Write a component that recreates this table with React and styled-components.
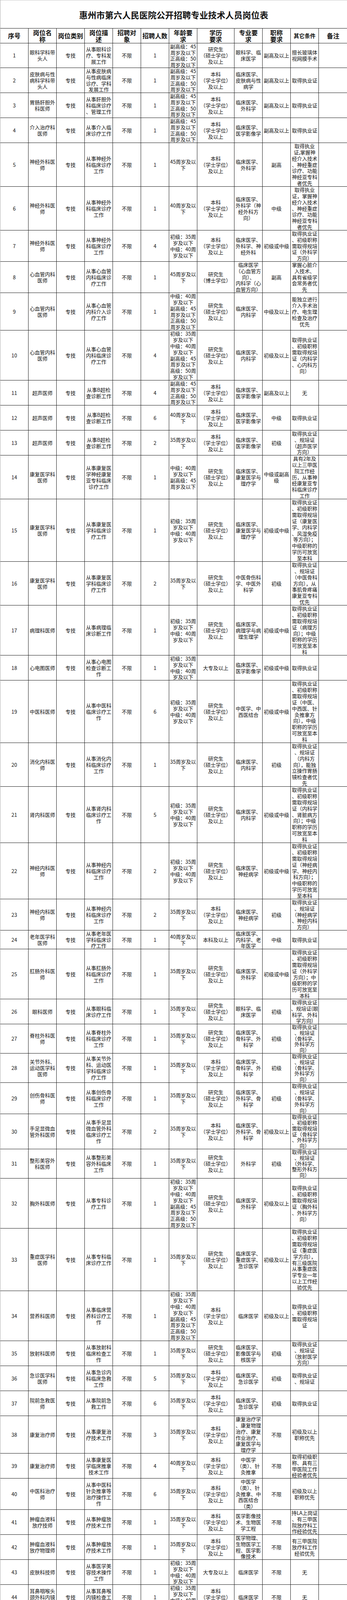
import React from 'react'
import styled, { createGlobalStyle } from 'styled-components'

const GlobalStyle = createGlobalStyle`
  html, body {
    margin: 0;
    padding: 0;
    background: #fff;
  }
  body {
    font-family: 'Noto Sans CJK SC', 'Noto Sans', sans-serif;
    color: #111;
  }
`

const COLS = '72px 72px 72px 72px 72px 72px 72px 95px 72px 72px 72px 73px'

// age strings
const HI = '副高级：45\n周岁及以下\n正高级：50\n周岁及以下'
const A45 = '45周岁及以\n下'
const A40 = '40周岁及以\n下'
const A35 = '35周岁及以\n下'
const A30 = '30周岁及以\n下'
const JZ = '初级：35周\n岁及以下\n中级：40周\n岁及以下'
const ZF = '中级：40周\n岁及以下\n副高级：45\n周岁及以下'
const ALL = JZ + '\n' + HI

// education strings
const SS = '研究生\n（硕士学位）\n及以上'
const BK = '本科\n（学士学位）\n及以上'
const BS = '研究生\n（博士学位）'
const DZ = '大专及以上'

const headers = [
  ['序号'],
  ['岗位名\n称'],
  ['岗位类别'],
  ['岗位描\n述'],
  ['招聘对\n象'],
  ['招聘人数'],
  ['年龄要\n求'],
  ['学历\n要求'],
  ['专业要\n求'],
  ['职称\n要求'],
  ['其它条件', true],
  ['备注'],
]

// [height, name, description, count, age, education, major, title, other]
const rows = [
  [63, '眼科学科带\n头人', '从事眼科诊\n疗、专科发\n展工作', '1', HI, SS, '眼科学、临\n床医学', '副高及以上', '擅长玻璃体\n视网膜手术'],
  [64, '皮肤病与性\n病科学科带\n头人', '从事皮肤病\n与性病临床\n诊疗、学科\n发展工作', '1', HI, BK, '临床医学、\n皮肤病与性\n病学', '副高及以上', '取得执业证'],
  [64, '胃肠肝胆外\n科医师', '从事肝胆外\n科临床诊疗\n、管理工作', '1', HI, BK, '临床医学、\n外科学', '副高及以上', '取得执业证'],
  [64, '介入治疗科\n医师', '从事介入临\n床诊疗工作', '1', HI, BK, '临床医学、\n医学影像学', '副高及以上', '取得执业证'],
  [112, '神经外科医\n师', '从事神经外\n科临床诊疗\n工作', '1', A45, BK, '临床医学、\n外科学', '副高', '取得执业\n证,掌握神\n经介入技术\n、神经重症\n诊疗、功能\n神经亚专科\n者优先'],
  [112, '神经外科医\n师', '从事神经外\n科临床诊疗\n工作', '1', A40, BK, '临床医学、\n外科学（神\n经外科方\n向）', '中级', '取得执业\n证，掌握神\n经介入技术\n、神经重症\n诊疗、功能\n神经亚专科\n者优先'],
  [80, '神经外科医\n师', '从事神经外\n科临床诊疗\n工作', '4', JZ, BK, '临床医学、\n外科学、神\n经外科', '初级或中级', '取得执业证\n、初级职称\n需取得规培\n证（外科学\n方向）'],
  [80, '心血管内科\n医师', '从事心血管\n内科临床诊\n疗工作', '1', A45, BS, '临床医学\n（心血管方\n向）、\n内科学（心\n血管方向）', '副高', '掌握心脏介\n入技术、\n具有省级学\n会常务者优\n先'],
  [96, '心血管内科\n医师', '从事心血管\n内科介入诊\n疗工作', '1', ZF + '\n正高级：50\n周岁及以下', SS, '临床医学、\n内科学', '中级及以上', '能独立进行\n介入手术治\n疗、电生理\n检查及治疗\n优先'],
  [128, '心血管内科\n医师', '从事心血管\n内科临床诊\n疗工作', '4', JZ + '\n副高级：45\n周岁及以下\n高级：50周\n岁及以下', SS, '临床医学、\n内科学', '初级及以上', '取得执业证\n、初级职称\n需取得规培\n证（内科学\n、心内科方\n向）'],
  [64, '超声医师', '从事B超检\n查诊断工作', '4', HI, BK, '临床医学、\n医学影像学', '副高及以上', '无'],
  [64, '超声医师', '从事B超检\n查诊断工作', '6', A40, BK, '临床医学、\n医学影像学', '中级', '取得执业证'],
  [64, '超声医师', '从事B超检\n查诊断工作', '2', A35, BK, '临床医学、\n医学影像学', '初级', '取得执业证\n、规培证\n（超声医学\n方向）'],
  [112, '康复医学科\n医师', '从事康复医\n学神经康复\n亚专科临床\n诊疗工作', '1', ZF, SS, '临床医学、\n康复医学与\n理疗学', '中级或副高\n级', '具有2年及\n以上三甲医\n院工作经\n历，从事神\n经康复亚专\n科临床诊疗\n工作'],
  [160, '康复医学科\n医师', '从事康复医\n学科临床诊\n疗工作', '1', JZ, SS, '临床医学、\n康复医学与\n理疗学', '初级或中级', '取得执业证\n、初级职称\n需取得规培\n证（康复医\n学、内科学\n、风湿免疫\n等方向）；\n中级职称的\n学历可放宽\n至本科'],
  [112, '康复医学科\n医师', '从事康复医\n学科临床诊\n疗工作', '2', A35, SS, '中医骨伤科\n学、中医外\n科学', '初级', '取得执业证\n、规培证\n（中医骨科\n方向），从\n事肌骨疼痛\n康复亚专科\n优先'],
  [128, '病理科医师', '从事病理临\n床诊断工作', '1', JZ, SS, '临床医学、\n病理学与病\n理生理学', '初级或中级', '取得执业证\n、初级职称\n需取得规培\n证（病理方\n向）；中级\n职称的学历\n可放宽至本\n科'],
  [64, '心电图医师', '从事心电图\n检查诊断工\n作', '1', JZ, DZ, '临床医学、\n医学影像学', '初级或中级', '取得执业证'],
  [160, '中医科医师', '从事中医科\n临床诊疗工\n作', '6', JZ, SS, '中医学、中\n西医结合', '初级或中级', '取得执业证\n、初级职称\n需取得规培\n证（中医、\n中西医、针\n灸推拿方\n向），中级\n职称的学历\n可放宽至本\n科'],
  [112, '消化内科医\n师', '从事消化内\n科临床诊疗\n工作', '1', A35, SS, '临床医学、\n内科学', '初级', '取得执业证\n、规培证\n（内科方\n向），能独\n立操作胃肠\n镜检查者优\n先'],
  [144, '肾内科医师', '从事肾内科\n临床诊疗工\n作', '5', JZ, SS, '临床医学、\n内科学', '初级或中级', '取得执业证\n、初级职称\n需取得规培\n证（内科学\n、肾脏病方\n向）；中级\n职称的学历\n可放宽至本\n科'],
  [144, '神经内科医\n师', '从事神经内\n科临床诊疗\n工作', '2', JZ, SS, '临床医学、\n神经病学', '初级或中级', '取得执业证\n、初级职称\n需取得规培\n证（神经病\n学、神经内\n科方向）；\n中级职称的\n学历可放宽\n至本科'],
  [80, '神经内科医\n师', '从事神经内\n科临床诊疗\n工作', '2', A35, BK, '临床医学、\n神经病学', '初级', '取得执业证\n、规培证\n（神经病学\n、神经内科\n方向）'],
  [48, '老年医学科\n医师', '从事老年医\n学科临床诊\n疗工作', '1', A40, '本科及以上', '临床医学、\n内科学、老\n年医学', '中级', '取得执业证'],
  [128, '肛肠外科医\n师', '从事肛肠外\n科临床诊疗\n工作', '1', A35, SS, '临床医学、\n外科学', '初级或中级', '取得执业证\n、初级职称\n需取得规培\n证（外科学\n方向）；中\n级职称的学\n历可放宽至\n本科'],
  [64, '眼科医师', '从事眼科临\n床诊疗工作', '1', A35, SS, '眼科学、临\n床医学', '初级', '取得执业证\n、规培证(眼\n科学、外科\n学方向)'],
  [75, '脊柱外科医\n师', '从事脊柱外\n科临床诊疗\n工作', '1', A35, SS, '临床医学、\n骨科学、外\n科学', '初级', '取得执业证\n、规培证\n（骨科学、\n外科学方\n向）'],
  [75, '关节外科、\n运动医学科\n医师', '从事关节外\n科、运动医\n学科临床诊\n疗工作', '1', A35, BK, '临床医学、\n骨科学、外\n科学', '初级', '取得执业证\n、规培证\n（骨科学、\n外科学方\n向）'],
  [80, '创伤骨科医\n师', '从事创伤骨\n科临床诊疗\n工作', '1', A35, SS, '临床医学、\n外科学、骨\n科学', '初级', '取得执业证\n、规培证\n（骨科学、\n外科学方\n向）'],
  [90, '手足显微血\n管外科医师', '从事手足显\n微血管外科\n临床诊疗工\n作', '2', A35, BK, '临床医学、\n外科学、骨\n科学', '初级及以上', '取得执业证\n、初级职称\n需取得规培\n证（骨科学\n、外科学方\n向）'],
  [75, '整形美容外\n科医师', '从事整形美\n容外科临床\n工作', '1', A35, SS, '外科学', '初级', '取得执业证\n、规培证\n（外科学、\n整形外科方\n向）'],
  [128, '胸外科医师', '从事专科诊\n疗工作', '1', ALL, SS, '临床医学、\n外科学', '初级及以上', '取得执业证\n、初级职称\n需取得规培\n证（胸外科\n、外科学方\n向）'],
  [160, '重症医学科\n医师', '从事专科临\n床诊疗工作', '1', A35, SS, '临床医学、\n重症医学、\n急诊医学', '初级及以上', '取得执业证\n、初级职称\n需取得规培\n证（重症医\n学方向），\n有三级医院\n从事重症医\n学专业一年\n以上工作经\n验优先'],
  [128, '营养科医师', '从事临床营\n养科诊疗工\n作', '1', ALL, BK, '临床医学', '初级及以上', '取得执业证\n、初级职称\n需取得规培\n证'],
  [64, '放射科医师', '从事放射科\n临床检查工\n作', '1', A35, SS, '临床医学、\n影像医学与\n核医学', '初级', '取得执业证\n、规培证\n（放射医学\n方向）'],
  [64, '急诊医学科\n医师', '从事急诊内\n科临床急救\n工作', '5', A35, BK, '临床医学、\n急诊医学', '初级', '取得执业证\n、规培证'],
  [64, '院前急救医\n师', '从事院前急\n救工作', '6', A35, BK, '临床医学、\n急诊医学', '初级', '取得执业证'],
  [96, '康复治疗师', '从事康复治\n疗技术工作', '3', A35, BK, '康复治疗学\n、康复物理\n治疗、康复\n作业治疗、\n康复医学与\n理疗学', '不限', '初级及以上\n职称优先'],
  [64, '康复治疗师', '从事康复医\n学临床推拿\n技术工作', '4', A40, BK, '中医学\n（类）、针\n灸推拿', '不限', '取得初级职\n称、具有三\n甲医院工作\n经验者优先'],
  [80, '中医科治疗\n师', '从事中医科\n针灸推拿等\n治疗操作工\n作', '6', A35, BK, '中医学\n（类）、针\n灸推拿、中\n西医结合\n（类）', '不限', '初级及以上\n职称优先'],
  [64, '肿瘤血液科\n放疗技师', '从事肿瘤放\n疗技术工作', '1', A35, BK, '医学影像技\n术、生物医\n学工程', '不限', '持LA上岗证\n、有三甲医\n院放疗科工\n作经验优先'],
  [64, '肿瘤血液科\n放疗物理师', '从事肿瘤放\n疗技术工作', '1', A35, BK, '医学物理、\n生物医学工\n程、医学影\n像技术', '不限', '有三甲医院\n放疗科工作\n经验优先'],
  [64, '皮肤科技师', '从事医学美\n容技术操作\n工作', '1', JZ, DZ, '临床医学', '不限', '无'],
  [64, '耳鼻咽喉头\n颈外科内镜\n技师', '从事耳鼻喉\n内镜检查工\n作', '1', JZ, BK, '临床医学', '不限', '无'],
  [48, '院前急救救\n护队员', '从事院前急\n救救护队员\n工作', '3', A30, DZ, '医疗相关专\n业', '不限', '无'],
]

// line pitch shrinks a little when a cell holds more lines than its row
const pitch = (text, h) => {
  const lines = String(text).split('\n').length
  return Math.max(14.5, Math.min(16, (h - 1) / lines))
}

const Page = styled.div`
  width: 888px;
  border-left: 1px solid #a8a8a8;
  box-sizing: border-box;
  background: #fff;
`

const Title = styled.h1`
  margin: 0;
  height: 72px;
  box-sizing: border-box;
  border-top: 1px solid #c8c8c8;
  display: flex;
  align-items: center;
  justify-content: center;
  font-size: 22px;
  font-weight: 700;
  color: #111;
`

const Table = styled.div`
  border-top: 1px solid #1a1a1a;
`

const Row = styled.div`
  display: grid;
  grid-template-columns: ${COLS};
  grid-template-rows: 100%;
  height: ${({ $h }) => $h}px;
  box-sizing: border-box;
  border-bottom: 1px solid #1a1a1a;
  overflow: hidden;
`

const Cell = styled.div`
  display: flex;
  align-items: center;
  justify-content: center;
  min-height: 0;
  overflow: hidden;
  border-right: 1px solid #1a1a1a;
  font-size: 13px;
  line-height: ${({ $lh }) => $lh || 16}px;
  text-align: center;
  white-space: pre;
  &:last-child {
    border-right: none;
  }
`

const HeadCell = styled(Cell)`
  font-size: ${({ $small }) => ($small ? '14px' : '16px')};
  line-height: 17px;
  font-weight: 700;
`

const Body = ({ h, children }) => <Cell $lh={pitch(children, h)}>{children}</Cell>

export default function App() {
  return (
    <>
      <GlobalStyle />
      <Page>
        <Title>惠州市第六人民医院公开招聘专业技术人员岗位表</Title>
        <Table>
          <Row $h={38}>
            {headers.map(([text, small], i) => (
              <HeadCell key={i} $small={small}>
                {text}
              </HeadCell>
            ))}
          </Row>
          {rows.map(([h, ...cells], i) => {
            const [name, desc, count, age, edu, major, title, other] = cells
            return (
              <Row key={i} $h={h}>
                <Body h={h}>{i + 1}</Body>
                <Body h={h}>{name}</Body>
                <Body h={h}>专技</Body>
                <Body h={h}>{desc}</Body>
                <Body h={h}>不限</Body>
                <Body h={h}>{count}</Body>
                <Body h={h}>{age}</Body>
                <Body h={h}>{edu}</Body>
                <Body h={h}>{major}</Body>
                <Body h={h}>{title}</Body>
                <Body h={h}>{other}</Body>
                <Cell />
              </Row>
            )
          })}
        </Table>
      </Page>
    </>
  )
}
